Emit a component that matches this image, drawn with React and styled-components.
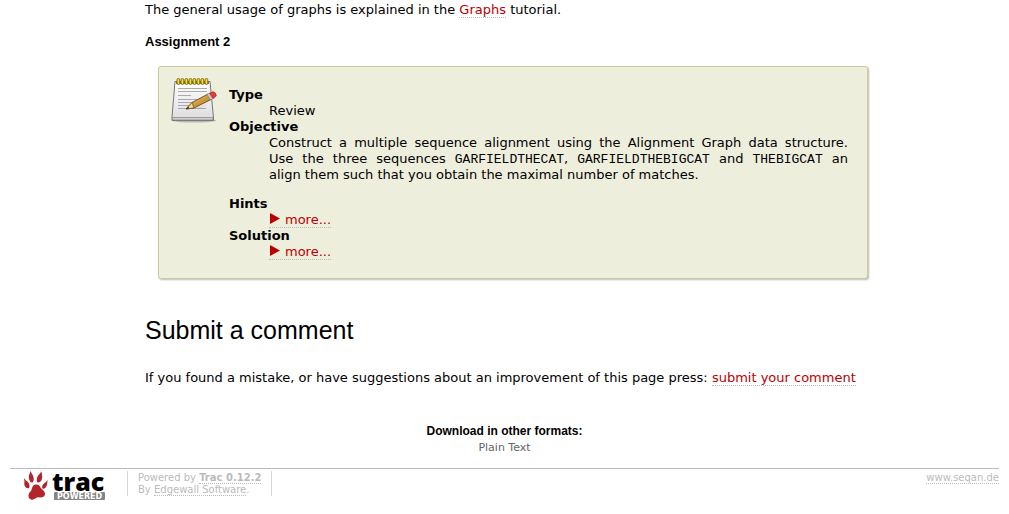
import React from 'react';
import styled, { createGlobalStyle } from 'styled-components';

const GlobalStyle = createGlobalStyle`
  body {
    margin: 0;
    background: #fff;
    color: #000;
    font: 13px/16px Verdana, "DejaVu Sans", sans-serif;
  }
`;

const Page = styled.div`
  padding: 2px 10px 0;
`;

const Content = styled.main`
  padding: 0 118px 0 135px;
`;

const Paragraph = styled.p`
  margin: 0;
`;

const Link = styled.a`
  color: #b00;
  text-decoration: none;
  border-bottom: 1px dotted #bbb;
`;

const AssignmentTitle = styled.h4`
  margin: 16px 0;
  font: bold 13px/16px Arial, "Liberation Sans", sans-serif;
`;

const AssignmentBox = styled.section`
  display: flex;
  gap: 12px;
  margin: 0 13px;
  padding: 10px 19px 18px 12px;
  background: #eeeedd;
  border: 1px solid #cccc99;
  border-radius: 3px;
  box-shadow: 1px 1px 2px #bbb;
`;

const NoteIcon = styled.svg`
  flex: none;
  width: 46px;
  height: 46px;
`;

const Details = styled.dl`
  flex: 1;
  margin: 10px 0 0;
`;

const Term = styled.dt`
  font-weight: bold;
  margin-top: ${(p) => (p.$spaced ? 13 : 0)}px;
`;

const Description = styled.dd`
  margin: 0 0 0 40px;
  text-align: justify;
`;

const Code = styled.code`
  font-family: "Liberation Mono", monospace;
  font-size: 13px;
  line-height: 1;
`;

const MoreLink = styled(Link)`
  display: inline-flex;
  gap: 5px;
  height: 15px;
  vertical-align: top;
`;

const Triangle = styled.svg`
  width: 11px;
  height: 12px;
  margin-top: 1px;
  fill: #b00;
`;

const SectionTitle = styled.h2`
  margin: 35px 0 24px;
  font: 25px/32px Arial, "Liberation Sans", sans-serif;
`;

const Formats = styled.section`
  margin-top: 37px;
  text-align: center;
`;

const FormatsTitle = styled.h3`
  margin: 0 0 1px;
  font: bold 12px/16px Arial, "Liberation Sans", sans-serif;
`;

const FormatLink = styled.a`
  display: block;
  font-size: 11px;
  color: #666;
  text-decoration: none;
`;

const Footer = styled.footer`
  display: flex;
  align-items: flex-start;
  margin-top: 12px;
  padding-top: 2px;
  border-top: 1px solid #bbb;
  color: #bbb;
  font-size: 10px;
  line-height: 12px;
`;

const LogoLink = styled.a`
  display: block;
  height: 30px;
  margin: 0 21px 0 12px;
`;

const Credits = styled.p`
  margin: 0;
  padding: 1px 10px 0;
  border: solid #d7d7d7;
  border-width: 0 1px;
`;

const FooterLink = styled.a`
  color: #bbb;
  text-decoration: none;
  border-bottom: 1px dotted #bbb;
`;

const Site = styled.p`
  margin: 0 0 0 auto;
  padding-top: 1px;
`;

function Notepad() {
  const rings = [0, 1, 2, 3, 4, 5, 6, 7];
  return (
    <NoteIcon viewBox="0 0 46 46" aria-hidden="true">
      <defs>
        <linearGradient id="paper" x1="0" y1="0" x2="0" y2="1">
          <stop offset="0" stopColor="#fff" />
          <stop offset="1" stopColor="#dcdce0" />
        </linearGradient>
        <linearGradient id="wood" x1="0" y1="0" x2="1" y2="1">
          <stop offset="0" stopColor="#f0cc70" />
          <stop offset="1" stopColor="#aa741c" />
        </linearGradient>
      </defs>
      <ellipse cx="23" cy="43.500" rx="22" ry="2" fill="#b9b9aa" />
      <path d="M4 4.500H39L42.500 41V43.500H1V40z" fill="url(#paper)" stroke="#777" />
      <path d="M1.500 40.500H42V43H1.500z" fill="#cfcfd2" stroke="#858585" strokeWidth=".7" />
      <path d="M5 4H38V7H5z" fill="#777" />
      {rings.map((n) => (
        <rect key={n} x={6 + n * 4} y="1.500" width="2.800" height="6" rx="1.400" fill="#f4dc43" stroke="#7b6400" strokeWidth=".9" />
      ))}
      <path d="M7 11.500H36M7 14.500H36M7 18.500H20M7 22.500H33M7 25.500H26M7 28.500H20M7 31.500H35" stroke="#aaa" />
      <path d="M16 32L32 30L38 25L30 31z" fill="#999" opacity=".5" />
      <path d="M15 32L21 25.500L37 17L40 22.500L23 31z" fill="url(#wood)" stroke="#704b10" strokeWidth=".9" />
      <path d="M15 32L21 25.500L23 31z" fill="#edd6a1" stroke="#704b10" strokeWidth=".7" />
      <path d="M15 32L17 29.500L18.500 31.500z" fill="#333" />
      <path d="M36 17.500L39 16L42 21.500L39.500 22.800z" fill="#ccc" stroke="#777" strokeWidth=".6" />
      <path d="M38.500 16.200L42 14.700Q45 15 45.300 19L42 21.500z" fill="#e83c3c" stroke="#aa2525" strokeWidth=".7" />
    </NoteIcon>
  );
}

function TracLogo() {
  return (
    <svg width="84" height="30" viewBox="0 0 84 30" role="img" aria-label="Trac Powered">
      <g fill="#b1252b">
        <path d="M8.500 0L10 3C12 5 12.500 10 10.500 11.500C8 12 6.500 8 7 4.500z" />
        <path d="M19.500 .500L20 4C21 8 18.500 12 16 11.500C14 10.500 14.500 6 17 3.500z" />
        <path d="M2 7L4 9.500C7 11 8.500 15 7 17C4 18 1.500 14.500 2.500 10.500z" />
        <path d="M25.500 9L25.300 12C25 16 22.500 18.500 20.500 17.500C19.500 15.500 21 12.500 23.500 11.500z" />
        <path d="M11 15C13.500 12.500 17.500 13.500 18.500 16.500C19.500 18.500 23 19.500 23 23C23 26 19.500 27 16.500 26.300C14 26 12.500 29.500 9 28.500C5.500 27 6 22.500 8.500 20.500C10 19 9.500 17 11 15z" />
      </g>
      <text x="30" y="20" fontFamily="Open Sans, sans-serif" fontWeight="800" fontSize="25">trac</text>
      <rect x="32" y="21" width="51" height="8" rx="1" fill="#858585" />
      <text x="35" y="28" fill="#fff" fontFamily="DejaVu Sans, sans-serif" fontWeight="bold" fontSize="8">POWERED</text>
    </svg>
  );
}

function More() {
  return (
    <MoreLink href="#more">
      <Triangle viewBox="0 0 11 12" aria-hidden="true">
        <path d="M1 0L11 5.500L1 11z" />
      </Triangle>
      more...
    </MoreLink>
  );
}

export default function App() {
  return (
    <Page>
      <GlobalStyle />
      <Content>
        <Paragraph>
          The general usage of graphs is explained in the <Link href="#graphs">Graphs</Link> tutorial.
        </Paragraph>
        <AssignmentTitle>Assignment 2</AssignmentTitle>
        <AssignmentBox>
          <Notepad />
          <Details>
            <Term>Type</Term>
            <Description>Review</Description>
            <Term>Objective</Term>
            <Description>
              Construct a multiple sequence alignment using the Alignment Graph data structure. Use&nbsp;the three
              sequences <Code>GARFIELDTHECAT</Code>, <Code>GARFIELDTHEBIGCAT</Code> and <Code>THEBIGCAT</Code> an
              align&nbsp;them such that you obtain the maximal number of matches.
            </Description>
            <Term $spaced>Hints</Term>
            <Description><More /></Description>
            <Term>Solution</Term>
            <Description><More /></Description>
          </Details>
        </AssignmentBox>
        <SectionTitle>Submit a comment</SectionTitle>
        <Paragraph>
          If you found a mistake, or have suggestions about an improvement of this page press:{' '}
          <Link href="#comment">submit your comment</Link>
        </Paragraph>
      </Content>
      <Formats>
        <FormatsTitle>Download in other formats:</FormatsTitle>
        <FormatLink href="#text">Plain Text</FormatLink>
      </Formats>
      <Footer>
        <LogoLink href="#trac"><TracLogo /></LogoLink>
        <Credits>
          Powered by <FooterLink href="#about"><strong>Trac 0.12.2</strong></FooterLink>
          <br />
          By <FooterLink href="#edgewall">Edgewall Software</FooterLink>.
        </Credits>
        <Site><FooterLink href="#seqan">www.seqan.de</FooterLink></Site>
      </Footer>
    </Page>
  );
}
